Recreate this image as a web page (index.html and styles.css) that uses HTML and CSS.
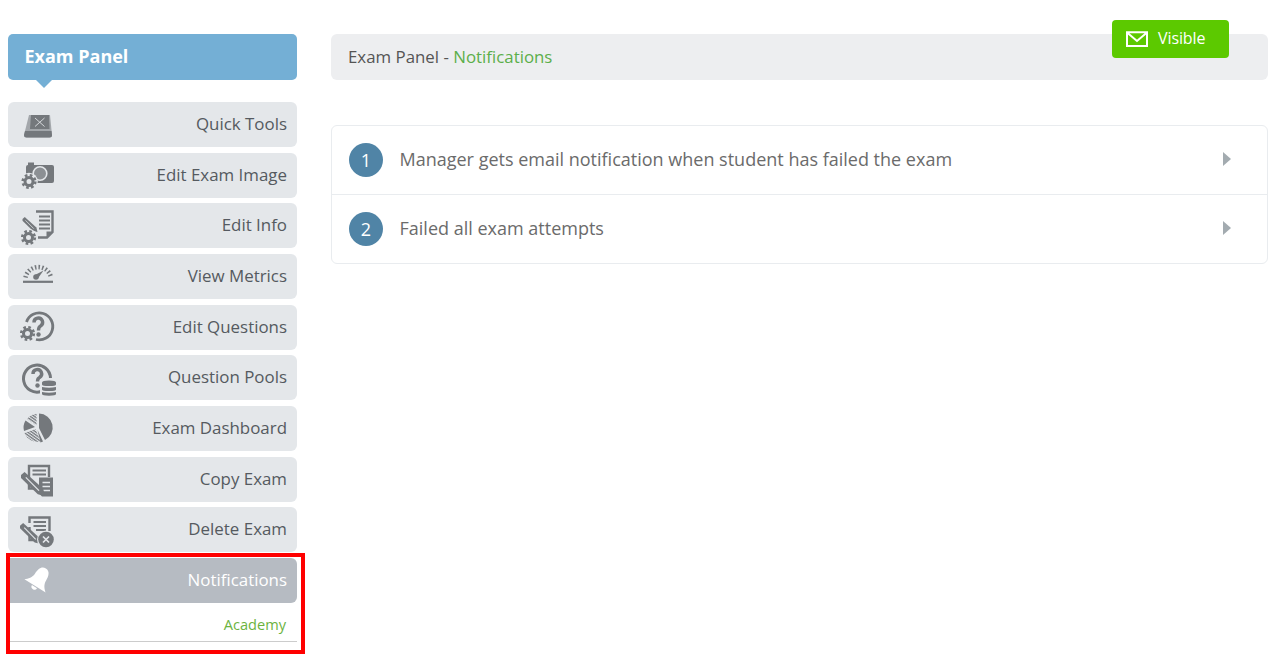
FILE: index.html
```html
<!DOCTYPE html>
<html lang="en">
<head>
<meta charset="utf-8">
<title>Exam Panel - Notifications</title>
<link rel="stylesheet" href="styles.css">
</head>
<body>
<svg class="defs" width="0" height="0" aria-hidden="true">
  <defs>
    <symbol id="gear" viewBox="-9 -9 18 18" overflow="visible">
      <circle r="8.800" class="halo"/>
      <circle r="4" fill="none" stroke="#74787c" stroke-width="3"/>
      <circle r="6.300" fill="none" stroke="#74787c" stroke-width="2.600" stroke-dasharray="2.600 2.350"/>
    </symbol>
    <symbol id="pen" viewBox="0 0 20 20" overflow="visible">
      <path d="M0 2.500L3 0L18.500 14L20 20L14 18.500L0 5Z" fill="#74787c"/>
      <path d="M4 4.500L15 15.500" stroke="#e4e7ea" stroke-width="1"/>
    </symbol>
    <pattern id="hatch" width="2.400" height="2.400" patternUnits="userSpaceOnUse" patternTransform="rotate(35)">
      <rect width="2.400" height="1.300" fill="#74787c"/>
    </pattern>
  </defs>
</svg>
<div class="page">
  <aside class="sidebar">
    <h2 class="panel-title">Exam Panel</h2>
    <nav class="menu">
      <a class="menu-item">
        <svg class="icon" viewBox="0 0 36 32">
          <path d="M8 6H29L31 26Q31 28.500 28.500 28.500H5.500Q3 28.500 3 26Z" fill="#a3a7ab"/>
          <path d="M10 6H28L28.500 20H9Z" fill="#74787c"/>
          <path d="M4 22H30.500L31 26Q31 28.500 28.500 28.500H5.500Q3 28.500 3 26Z" fill="#74787c"/>
          <path d="M14 9L23.500 17.500M23.500 9L14 17.500" stroke="#d4d7da" stroke-width="1"/>
        </svg>
        <span>Quick Tools</span>
      </a>
      <a class="menu-item">
        <svg class="icon" viewBox="0 0 36 32">
          <path d="M5 8Q5 6 7 6V3.500H13V6H31Q33 6 33 8V22Q33 24 31 24H5Z" fill="#74787c"/>
          <circle cx="19" cy="14.500" r="6.800" fill="#8c9094" stroke="#e4e7ea" stroke-width="1.600"/>
          <use href="#gear" x="-1" y="13.500" width="18" height="18"/>
        </svg>
        <span>Edit Exam Image</span>
      </a>
      <a class="menu-item">
        <svg class="icon" viewBox="0 0 36 32">
          <path d="M15 1.500H31.500V22L26 27.500H17" fill="none" stroke="#74787c" stroke-width="2.400"/>
          <path d="M18 6.500H29M18 10.500H29M18 14.500H29M18 18.500H29" stroke="#74787c" stroke-width="2.200"/>
          <path d="M25.500 27.500V21.500H32Z" fill="#74787c"/>
          <use href="#pen" x="1.500" y="7" width="15" height="15"/>
          <use href="#gear" x="-1.500" y="18.500" width="18" height="18"/>
        </svg>
        <span>Edit Info</span>
      </a>
      <a class="menu-item">
        <svg class="icon" viewBox="0 0 36 32">
          <path d="M4.500 17.500A13 13 0 0 1 30 17.500" fill="none" stroke="#74787c" stroke-width="4.500" stroke-dasharray="1.500 2.100"/>
          <path d="M2 21.800H32" stroke="#74787c" stroke-width="2.200"/>
          <circle cx="15" cy="17" r="2.800" fill="#74787c"/>
          <path d="M14 15L22.500 10.500L16.500 19Z" fill="#74787c"/>
        </svg>
        <span>View Metrics</span>
      </a>
      <a class="menu-item">
        <svg class="icon" viewBox="0 0 36 32">
          <path d="M5.500 11A13.500 13.500 0 1 1 15 28.500" fill="none" stroke="#74787c" stroke-width="2.800"/>
          <path d="M13 11.500A4.300 4.300 0 1 1 19.500 15Q17.500 16 17.500 19.500" fill="none" stroke="#74787c" stroke-width="3.400"/>
          <circle cx="17.500" cy="23.500" r="2.200" fill="#74787c"/>
          <use href="#gear" x="-2.500" y="13.500" width="18" height="18"/>
        </svg>
        <span>Edit Questions</span>
      </a>
      <a class="menu-item">
        <svg class="icon" viewBox="0 0 36 32">
          <path d="M20 29.500A13.500 13.500 0 1 1 29.500 16" fill="none" stroke="#74787c" stroke-width="3"/>
          <path d="M12 12A4.300 4.300 0 1 1 18.500 15.500Q16.500 16.500 16.500 19.500" fill="none" stroke="#74787c" stroke-width="3.400"/>
          <circle cx="16.500" cy="23.500" r="2.200" fill="#74787c"/>
          <rect x="19" y="17" width="18" height="18" fill="#e4e7ea"/>
          <path d="M21 20.500Q21 18.500 28 18.500Q35 18.500 35 20.500V22.500Q35 24 28 24Q21 24 21 22.500ZM21 25Q28 26.500 35 25V27.500Q35 29 28 29Q21 29 21 27.500ZM21 30Q28 31.500 35 30V32Q35 33.700 28 33.700Q21 33.700 21 32Z" fill="#74787c"/>
        </svg>
        <span>Question Pools</span>
      </a>
      <a class="menu-item">
        <svg class="icon" viewBox="0 0 36 32">
          <path d="M18 1.500A14 14 0 0 1 24 28L18 16Z" fill="#74787c"/>
          <path d="M15.500 1.700A14 14 0 0 0 6 7L15.500 13.500Z" fill="url(#hatch)"/>
          <path d="M4.500 8.500L14 15L3 19A14 14 0 0 1 4.500 8.500Z" fill="#74787c"/>
          <path d="M3.500 21L14.500 17L19.500 29.500A14 14 0 0 1 3.500 21Z" fill="url(#hatch)"/>
          <path d="M16.500 18L22 29.500L19.500 30.500Z" fill="#74787c"/>
        </svg>
        <span>Exam Dashboard</span>
      </a>
      <a class="menu-item">
        <svg class="icon" viewBox="0 0 36 32">
          <path d="M16 25.500H8V3H28V14" fill="none" stroke="#74787c" stroke-width="2.400"/>
          <path d="M11.500 7.500H25M11.500 11.500H25" stroke="#74787c" stroke-width="2.200"/>
          <path d="M18 14.500H32V33.500H21L18 30.500Z" fill="#74787c"/>
          <path d="M21.500 19.500H29M21.500 23.500H29M21.500 27.500H29" stroke="#e4e7ea" stroke-width="1.400"/>
          <use href="#pen" x="0" y="9" width="24" height="24"/>
        </svg>
        <span>Copy Exam</span>
      </a>
      <a class="menu-item">
        <svg class="icon" viewBox="0 0 36 32">
          <path d="M8.500 13V26H18M8.500 9V3.500H28.500V17" fill="none" stroke="#74787c" stroke-width="2.400"/>
          <path d="M12.500 8H25M12.500 12H25M15 16H25" stroke="#74787c" stroke-width="2.200"/>
          <use href="#pen" x="-1" y="9" width="21" height="21"/>
          <circle cx="25" cy="25.500" r="9" fill="#e4e7ea"/>
          <circle cx="25" cy="25.500" r="7.800" fill="#74787c"/>
          <path d="M22 22.500L28 28.500M28 22.500L22 28.500" stroke="#e4e7ea" stroke-width="1.700"/>
        </svg>
        <span>Delete Exam</span>
      </a>
      <a class="menu-item active">
        <svg class="icon" viewBox="0 0 36 32">
          <g transform="translate(18 15.500) rotate(32)" fill="#fff">
            <path d="M0 -13C5 -13 6.500 -8 6.500 -3C6.500 2 9.500 5 12.500 7.500H-12.500C-9.500 5 -6.500 2 -6.500 -3C-6.500 -8 -5 -13 0 -13Z"/>
            <path d="M-3 8.500H3A3 3 0 0 1 -3 8.500Z"/>
          </g>
        </svg>
        <span>Notifications</span>
      </a>
    </nav>
    <p class="academy"><a>Academy</a></p>
  </aside>
  <main class="content">
    <div class="breadcrumb">Exam Panel - <a>Notifications</a></div>
    <ul class="list">
      <li class="list-row">
        <span class="num">1</span>
        <span class="label">Manager gets email notification when student has failed the exam</span>
        <span class="caret"></span>
      </li>
      <li class="list-row">
        <span class="num">2</span>
        <span class="label">Failed all exam attempts</span>
        <span class="caret"></span>
      </li>
    </ul>
  </main>
</div>
<button class="visible-btn" type="button">
  <svg class="mail" viewBox="0 0 24 16">
    <path d="M2 1.200H22V15H2ZM2 1.500L12 10L22 1.500" fill="none" stroke="#fff" stroke-width="2"/>
  </svg>
  <span class="visible-text">Visible</span>
</button>
<div class="highlight"></div>
</body>
</html>
```

FILE: styles.css
```css
* { box-sizing: border-box; }
html, body { margin: 0; height: 100%; overflow: hidden; background: #fff; }
body { font-family: "Open Sans", "Noto Sans", sans-serif; color: #555; position: relative; }
.defs { position: absolute; }
.halo { fill: #e4e7ea; }

.page { display: flex; padding: 34px 14px 0 8px; gap: 34px; }
.sidebar { width: 289px; flex: none; }
.content { flex: 1; min-width: 0; }

.panel-title {
  position: relative;
  margin: 0;
  height: 46px;
  padding: 0 17px 2px 16.500px;
  display: flex;
  align-items: center;
  background: #74afd5;
  color: #fff;
  font-size: 18px;
  font-weight: 700;
  border-radius: 5px;
}
.panel-title::after {
  content: "";
  position: absolute;
  left: 28px;
  top: 100%;
  border: 8px solid transparent;
  border-bottom: 0;
  border-top-color: #74afd5;
}

.menu { margin-top: 22px; display: flex; flex-direction: column; gap: 5.67px; }
.menu-item {
  height: 45px;
  display: flex;
  align-items: center;
  justify-content: space-between;
  padding: 0 10px 0 13px;
  background: #e4e7ea;
  border-radius: 6px;
  font-size: 16.9px;
  color: #555a60;
}
.menu-item span { padding-bottom: 2px; }
.menu-item.active { background: #b6bbc2; color: #fff; border-radius: 0 6px 6px 0; margin-left: 2px; padding-left: 11px; }
.icon { width: 36px; height: 32px; flex: none; overflow: visible; }

.academy {
  margin: 0 0 0 2px;
  height: 39px;
  padding: 12px 11px 0 0;
  text-align: right;
  font-size: 14.6px;
  line-height: 19px;
  color: #6cb33f;
  border-bottom: 1px solid #ccc;
}

.breadcrumb {
  height: 46px;
  padding: 0 17px 2px;
  display: flex;
  align-items: center;
  white-space: pre;
  background: #edeef0;
  border-radius: 6px;
  font-size: 16.85px;
  color: #555;
}
.breadcrumb a { color: #5cae4a; }

.list {
  list-style: none;
  margin: 45px 0 0;
  padding: 0;
  border: 1px solid #e9ecef;
  border-radius: 6px;
}
.list-row {
  height: 68px;
  display: flex;
  align-items: center;
  padding: 0 36px 0 17px;
}
.list-row + .list-row { border-top: 1px solid #e9ecef; height: 69px; }
.num {
  width: 34px;
  height: 34px;
  flex: none;
  display: flex;
  align-items: center;
  justify-content: center;
  border-radius: 50%;
  background: #5084a6;
  color: #fff;
  font-size: 18px;
}
.label { flex: 1; margin-left: 16.5px; padding-bottom: 2px; font-size: 18px; color: #6b6b6b; }
.caret {
  width: 0;
  height: 0;
  margin-bottom: 3px;
  border: 7px solid transparent;
  border-right: 0;
  border-left: 8px solid #a3abb0;
}

.visible-btn {
  position: absolute;
  left: 1112px;
  top: 20px;
  width: 117px;
  height: 38px;
  padding: 0 0 0 13px;
  display: flex;
  align-items: center;
  gap: 9px;
  background: #5cc900;
  border: 0;
  border-radius: 4px;
  color: #fff;
  font: 16px "Open Sans", sans-serif;
  letter-spacing: -0.1px;
}
.visible-text { margin-top: -2px; }
.mail { width: 24px; height: 16px; flex: none; }

.highlight {
  position: absolute;
  left: 6px;
  top: 553px;
  width: 299px;
  height: 101px;
  border: 4px solid #f00;
  pointer-events: none;
}
```
